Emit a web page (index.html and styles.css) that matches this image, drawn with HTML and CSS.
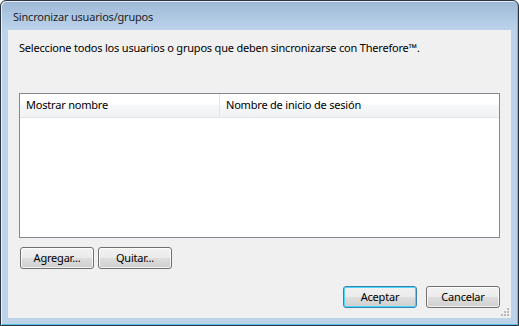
FILE: index.html
```html
<!DOCTYPE html>
<html lang="es">
<head>
<meta charset="utf-8">
<title>Sincronizar usuarios/grupos</title>
<link rel="stylesheet" href="styles.css">
</head>
<body>
<div class="window">
  <div class="titlebar">Sincronizar usuarios/grupos</div>
  <div class="client">
    <p class="intro">Seleccione todos los usuarios o grupos que deben sincronizarse con Therefore™.</p>
    <div class="list">
      <div class="list-header">
        <div class="col col-name">Mostrar nombre</div>
        <div class="col col-login">Nombre de inicio de sesión</div>
      </div>
      <div class="list-body"></div>
    </div>
    <div class="row-actions">
      <button class="btn">Agregar...</button>
      <button class="btn">Quitar...</button>
    </div>
    <div class="row-dialog">
      <button class="btn btn-default">Aceptar</button>
      <button class="btn">Cancelar</button>
    </div>
    <div class="grip">
      <span></span><span></span><span></span><span></span><span></span><span></span>
    </div>
  </div>
</div>
</body>
</html>
```
FILE: styles.css
```css
* { box-sizing: border-box; }
html, body {
  margin: 0;
  padding: 0;
  background: #ffffff;
}
body {
  font-family: "Noto Sans", "DejaVu Sans", sans-serif;
  font-size: 11px;
  letter-spacing: -0.2px;
  color: #000;
}
.window {
  width: 519px;
  height: 326px;
  border: 1px solid #2c3440;
  border-radius: 6px 6px 0 0;
  background: linear-gradient(#9cb7d6 0px, #adc6e1 14px, #bcd3ea 30px, #bcd3ea 100%);
  box-shadow: inset 1px 1px 0 rgba(255,255,255,0.7), inset -1px -1px 0 #4fc6e6;
  padding: 0 7px 7px 7px;
  display: flex;
  flex-direction: column;
}
.titlebar {
  height: 29px;
  line-height: 29px;
  padding-left: 5px;
  padding-top: 1px;
  color: #1e1e1e;
}
.client {
  position: relative;
  flex: 1;
  background: #f0f0f0;
  padding: 10px 11px 0 11px;
  display: flex;
  flex-direction: column;
}
.intro {
  margin: 0;
  height: 15px;
  line-height: 15px;
}
.list {
  margin-top: 38px;
  width: 481px;
  height: 145px;
  border: 1px solid #828790;
  background: #fff;
}
.list-header {
  display: flex;
  height: 24px;
  border-bottom: 1px solid #e5e5e5;
  background: linear-gradient(#ffffff 0%, #ffffff 45%, #f6f7f8 50%, #f1f2f4 100%);
}
.col {
  line-height: 22px;
  padding-left: 6px;
}
.col-name {
  width: 200px;
  border-right: 1px solid #e3e4e6;
}
.row-actions {
  margin-top: 9px;
  padding-left: 1px;
  display: flex;
  gap: 4px;
}
.row-dialog {
  margin-top: 17px;
  display: flex;
  justify-content: flex-end;
  gap: 9px;
  width: 481px;
}
.btn {
  width: 74px;
  height: 22px;
  padding: 0;
  font: inherit;
  letter-spacing: inherit;
  color: #000;
  border: 1px solid #707070;
  border-radius: 3px;
  background: linear-gradient(#f2f2f2 0%, #ebebeb 48%, #dddddd 52%, #cfcfcf 100%);
  box-shadow: inset 0 0 0 1px rgba(255,255,255,0.75);
  line-height: 18px;
}
.btn-default {
  border-color: #3c7fb1;
  box-shadow: inset 0 0 0 1px #48d8fb;
}
.grip {
  position: absolute;
  right: 2px;
  bottom: 2px;
  width: 10px;
  height: 10px;
}
.grip span {
  position: absolute;
  width: 2px;
  height: 2px;
  background: #b8b8b8;
}
.grip span:nth-child(1) { right: 0; bottom: 0; }
.grip span:nth-child(2) { right: 3px; bottom: 0; }
.grip span:nth-child(3) { right: 6px; bottom: 0; }
.grip span:nth-child(4) { right: 0; bottom: 3px; }
.grip span:nth-child(5) { right: 3px; bottom: 3px; }
.grip span:nth-child(6) { right: 0; bottom: 6px; }
```
